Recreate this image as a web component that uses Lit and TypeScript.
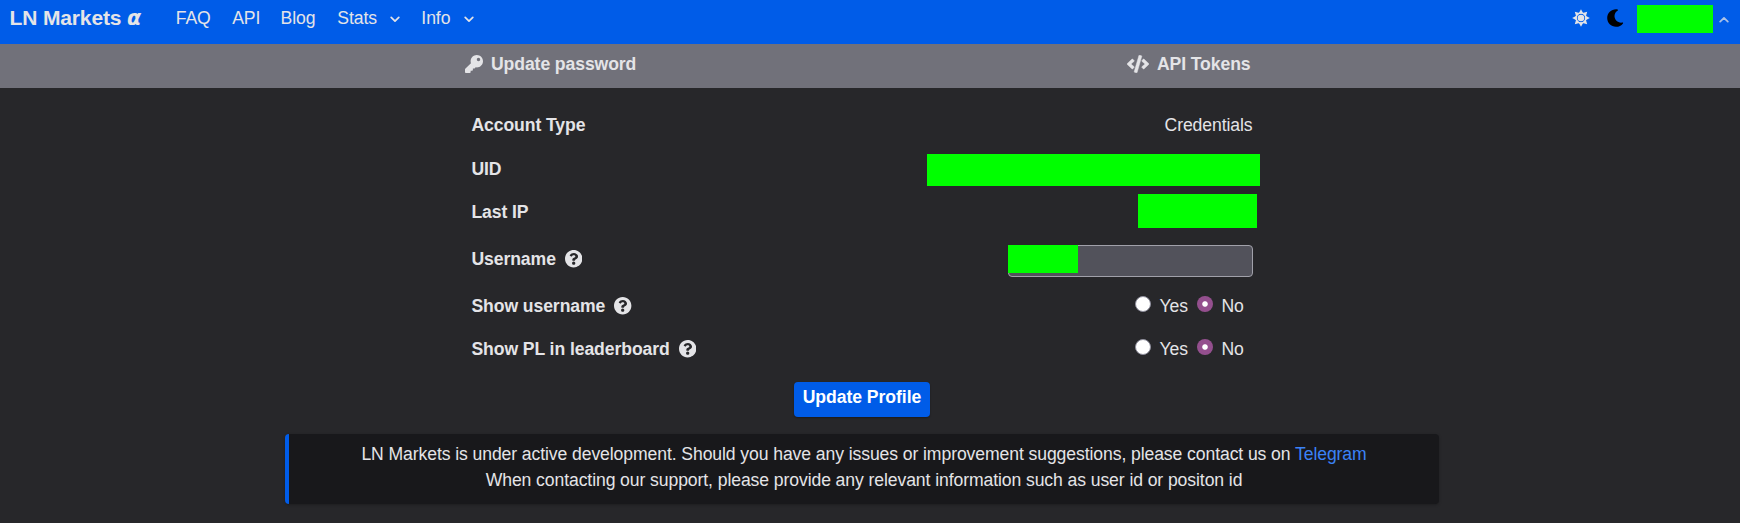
import { LitElement, html, css, svg } from "lit";

const help = html`<svg class="help" viewBox="8 8 496 496" width="17.4" height="17.4"><path fill="currentColor" d="M504 256c0 136.997-111.043 248-248 248S8 392.997 8 256C8 119.083 119.043 8 256 8s248 111.083 248 248zM262.655 90c-54.497 0-89.255 22.957-116.549 63.758-3.536 5.286-2.353 12.415 2.715 16.258l34.699 26.31c5.205 3.947 12.621 3.008 16.665-2.122 17.864-22.658 30.113-35.797 57.303-35.797 20.429 0 45.698 13.148 45.698 32.958 0 14.976-12.363 22.667-32.534 33.976C247.128 238.528 216 254.941 216 296v4c0 6.627 5.373 12 12 12h56c6.627 0 12-5.373 12-12v-1.333c0-28.462 83.186-29.647 83.186-106.667 0-58.002-60.165-102-116.531-102zM256 338c-25.365 0-46 20.635-46 46 0 25.364 20.635 46 46 46s46-20.636 46-46c0-25.365-20.635-46-46-46z"/></svg>`;

const key = html`<svg viewBox="0 0 512 512" width="18" height="18"><path fill="currentColor" d="M512 176.001C512 273.203 433.202 352 336 352c-11.22 0-22.19-1.062-32.827-3.069l-24.012 27.014A23.999 23.999 0 0 1 261.223 384H224v40c0 13.255-10.745 24-24 24h-40v40c0 13.255-10.745 24-24 24H24c-13.255 0-24-10.745-24-24v-78.059c0-6.365 2.529-12.47 7.029-16.971l161.802-161.802C163.108 213.814 160 195.271 160 176 160 78.798 238.797.001 335.999 0 433.488-.001 512 78.511 512 176.001zM336 128c0 26.51 21.49 48 48 48s48-21.49 48-48-21.49-48-48-48-48 21.49-48 48z"/></svg>`;

const code = html`<svg viewBox="0 0 640 512" width="22" height="18"><path fill="currentColor" stroke="currentColor" stroke-width="14" d="M278.900 511.500l-61-17.700c-6.400-1.800-10-8.500-8.200-14.900L346.200 8.700c1.800-6.400 8.500-10 14.900-8.200l61 17.700c6.400 1.800 10 8.500 8.200 14.900L293.800 503.300c-1.900 6.400-8.500 10.100-14.900 8.200zm-114-112.200l43.500-46.400c4.600-4.900 4.300-12.700-.8-17.200L117 256l90.600-79.700c5.100-4.500 5.500-12.300.8-17.200l-43.500-46.400c-4.500-4.800-12.100-5.100-17-.5L3.800 247.200c-5.100 4.700-5.100 12.800 0 17.500l144.100 135.100c4.900 4.600 12.500 4.400 17-.5zm327.200.6l144.100-135.100c5.100-4.700 5.100-12.800 0-17.500L492.100 112.100c-4.800-4.500-12.400-4.300-17 .5L431.600 159c-4.600 4.900-4.300 12.700.8 17.200L523 256l-90.600 79.700c-5.100 4.500-5.500 12.300-.8 17.200l43.500 46.400c4.500 4.900 12.100 5.100 17 .6z"/></svg>`;

const rays = Array.from({ length: 8 }, (_, i) => svg`<path transform="rotate(${i * 45} 9 9)" d="M9 .2 11.3 4.4H6.7Z"/>`);
const sun = html`<svg class="sun" viewBox="0 0 18 18" width="18" height="18"><g fill="currentColor">${rays}<circle cx="9" cy="9" r="3.3"/></g><circle cx="9" cy="9" r="4.9" fill="none" stroke="currentColor" stroke-width="1.5"/></svg>`;
const moon = html`<svg class="moon" viewBox="0 0 17 18" width="17" height="18"><path fill="#000" d="M9.2.2C4.1.2.2 4.100.2 9s3.900 8.800 8.800 8.800c2.900 0 5.400-1.300 7-3.400.3-.4 0-.9-.500-.800-4.200.800-8-2.400-8-6.500 0-2.400 1.300-4.600 3.300-5.700.4-.3.3-.9-.200-1Q9.900.2 9.200.2Z"/></svg>`;
const chevron = html`<svg class="chev" viewBox="0 0 10 7" width="10" height="7"><path fill="none" stroke="currentColor" stroke-width="1.7" stroke-linecap="round" stroke-linejoin="round" d="M1.200 1.300 5 5.100 8.800 1.300"/></svg>`;

class AppRoot extends LitElement {
  static styles = css`
    :host {
      display: flex; flex-direction: column; box-sizing: border-box; height: 523px;
      background: #27272a; color: #e4e4e7; overflow: hidden;
      font: 17.600px "Liberation Sans", Arial, sans-serif; letter-spacing: -0.093px;
    }
    svg { display: block; flex: none; }
    nav { display: flex; box-sizing: border-box; height: 44px; padding: 0 11.500px 0 9.600px; background: #005ce8; line-height: 36px; white-space: nowrap; }
    .brand { width: 166.200px; font-size: 21px; font-weight: bold; letter-spacing: -0.150px; }
    .brand i { font-family: "DejaVu Sans", sans-serif; font-size: 20.500px; line-height: 1; }
    .faq { width: 56.400px; }
    .api { width: 48.400px; }
    .blog { width: 56.800px; }
    .stats { display: flex; width: 84px; }
    .info { display: flex; }
    .chev { margin: 16px 0 0 auto; }
    .stats .chev { margin-right: 21.500px; }
    .info .chev { margin-left: 14px; }
    .tools { display: flex; margin-left: auto; }
    .sun { margin: 9px 17px 0 0; }
    .moon { margin-top: 9px; }
    .mask { background: #0f0; }
    .user { width: 76px; height: 28px; margin: 5px 6px 0 13px; }
    .tools .chev { transform: rotate(180deg); opacity: 0.75; }
    .sub { display: flex; justify-content: space-between; box-sizing: border-box; height: 44px; padding: 0 489.500px 0 465px; background: #71717a; font-weight: bold; line-height: 40px; }
    .tab { display: flex; gap: 8px; }
    .tab svg { margin-top: 11px; }
    main { display: flex; flex-direction: column; align-items: center; padding-top: 15px; }
    .form { display: grid; grid-template-rows: 44px 44px 42px 52px 42px 44px; width: 782px; margin-right: 17px; }
    .row { display: flex; align-items: center; }
    .row b { flex: 1; display: flex; align-items: center; gap: 9px; letter-spacing: -0.080px; padding-left: 0.900px; }
    .uid { width: 333px; height: 32px; margin: 2px -7px 0 0; }
    .ip { width: 119px; height: 34px; margin: -2px -4px 0 0; }
    .field { display: flex; box-sizing: border-box; width: 245px; height: 32px; margin-top: 4px; background: #52525b; border: 1px solid #a1a1aa; border-radius: 4px; }
    .name { width: 70px; height: 28px; margin: -1px 0 0 -1px; }
    .opts { display: flex; align-items: center; gap: 9px; width: 118px; }
    .dot { flex: none; box-sizing: border-box; width: 16px; height: 16px; margin-top: -4px; border: 1px solid #8f8f9d; border-radius: 50%; background: #fff; }
    .dot.on { border: 0; background: radial-gradient(circle, #fff 2.300px, #944f8e 3.200px); }
    .yes { width: 28px; }
    .btn { box-sizing: border-box; width: 136px; height: 35px; margin: 11px 16px 0 0; border: 0; padding: 0 0 5px; border-radius: 4px; background: #005ce8; color: #fff; font: bold 17.600px/30px "Liberation Sans", Arial, sans-serif; letter-spacing: -0.050px; box-shadow: 0 1px 2px #0005; }
    .note { box-sizing: border-box; width: 1154px; height: 70px; margin: 17px 16px 0 0; padding-top: 7px; border-left: 4px solid #005ce8; border-radius: 4px; background: #18181b; text-align: center; line-height: 26px; box-shadow: 0 1px 3px #0004; }
    .note p { margin: 0; }
    .note a { color: #3b82f6; }
  `;

  private choice() {
    return html`<span class="opts"><span class="dot"></span><span class="yes">Yes</span><span class="dot on"></span><span>No</span></span>`;
  }

  render() {
    return html`
      <nav>
        <span class="brand">LN Markets <i>α</i></span>
        <span class="faq">FAQ</span><span class="api">API</span><span class="blog">Blog</span>
        <span class="stats">Stats ${chevron}</span><span class="info">Info ${chevron}</span>
        <span class="tools">${sun}${moon}<span class="mask user"></span>${chevron}</span>
      </nav>
      <div class="sub">
        <span class="tab">${key}<span>Update password</span></span>
        <span class="tab">${code}<span>API Tokens</span></span>
      </div>
      <main>
        <div class="form">
          <div class="row"><b>Account Type</b><span>Credentials</span></div>
          <div class="row"><b>UID</b><span class="mask uid"></span></div>
          <div class="row"><b>Last IP</b><span class="mask ip"></span></div>
          <div class="row"><b>Username ${help}</b><span class="field"><span class="mask name"></span></span></div>
          <div class="row"><b>Show username ${help}</b>${this.choice()}</div>
          <div class="row"><b>Show PL in leaderboard ${help}</b>${this.choice()}</div>
        </div>
        <button class="btn">Update Profile</button>
        <div class="note">
          <p>LN Markets is under active development. Should you have any issues or improvement suggestions, please contact us on <a>Telegram</a></p>
          <p>When contacting our support, please provide any relevant information such as user id or positon id</p>
        </div>
      </main>
    `;
  }
}
customElements.define("app-root", AppRoot);
